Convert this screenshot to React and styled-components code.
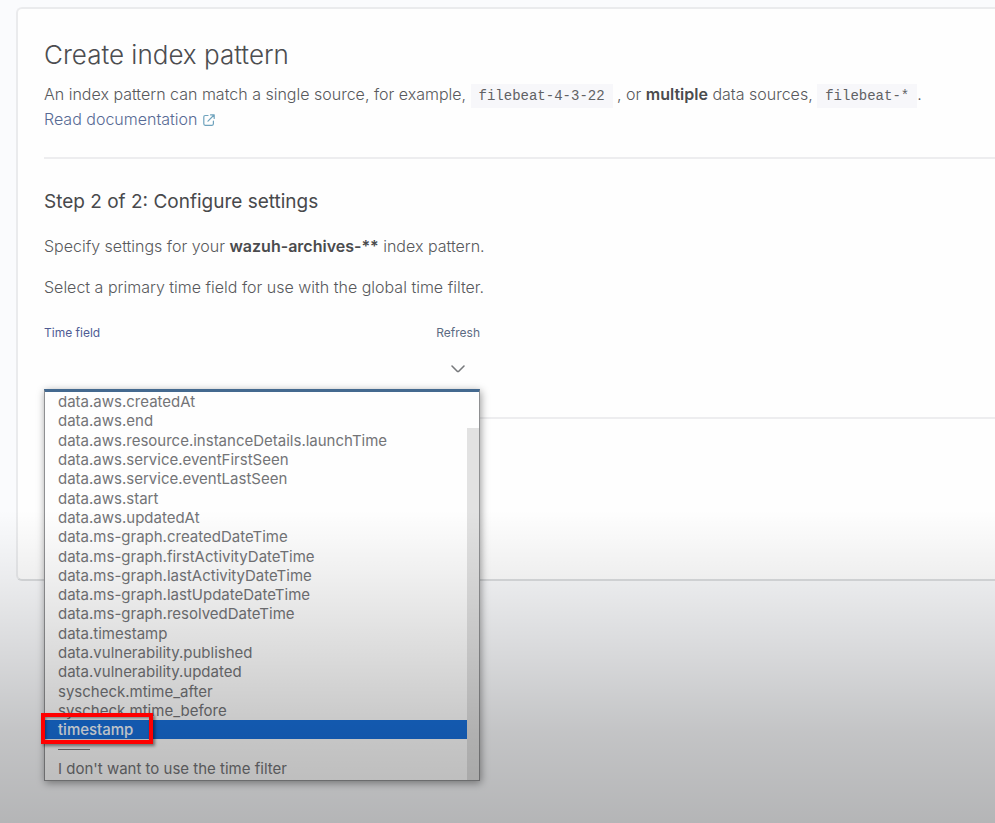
import React, { useState } from 'react';
import styled, { createGlobalStyle } from 'styled-components';

const GlobalStyle = createGlobalStyle`
  * { box-sizing: border-box; }
  body {
    margin: 0;
    background: #fafbfd;
    color: #58595c;
    font-family: Inter, "Liberation Sans", sans-serif;
    font-size: 16px;
    font-weight: 300;
    line-height: 25px;
  }
  h1, h2, p { margin: 0; }
`;

const Page = styled.div`
  position: relative;
  min-height: 100vh;
  padding: 7px 0 0 16px;
  overflow: hidden;
`;

const Shade = styled.div`
  position: absolute;
  inset: 0;
  z-index: 5;
  pointer-events: none;
  background: linear-gradient(
    to bottom,
    rgba(0, 0, 0, 0) 62%,
    rgba(0, 0, 0, 0.06) 70%,
    rgba(0, 0, 0, 0.14) 80%,
    rgba(0, 0, 0, 0.22) 89%,
    rgba(0, 0, 0, 0.28) 100%
  );
`;

const Panel = styled.main`
  min-height: 574px;
  padding: 30px 0 0 26px;
  background: #fefefe;
  border: 2px solid #eaebed;
  border-right: 0;
  border-bottom-color: #dcdee0;
  border-radius: 6px 0 0 6px;
`;

const Title = styled.h1`
  font-size: 26px;
  font-weight: 300;
  line-height: 32px;
  color: #4c4d50;
  margin-bottom: 11px;
`;

const Code = styled.code`
  padding: 4px 8px;
  background: #f7f7fa;
  font-family: "Liberation Mono", monospace;
  font-size: 14px;
  font-weight: 400;
  line-height: 16px;
  color: #606164;
`;

const Strong = styled.strong`
  font-weight: 600;
  color: #4a4b4d;
`;

const DocLink = styled.a`
  display: flex;
  align-items: center;
  gap: 5px;
  width: max-content;
  color: #576a94;
  text-decoration: none;
`;

const Divider = styled.hr`
  height: 2px;
  margin: 0;
  border: 0;
  background: #ededef;
`;

const Intro = styled.header`
  padding-bottom: 25px;
`;

const Settings = styled.form`
  display: flex;
  flex-direction: column;
  gap: 16px;
  padding: 29px 0 28px;
`;

const Subtitle = styled.h2`
  font-size: 19px;
  font-weight: 400;
  line-height: 28px;
  color: #48494c;
  margin-bottom: 2px;
`;

const Field = styled.div`
  position: relative;
  width: 436px;
  max-width: 100%;
  padding-top: 4px;
`;

const FieldHeader = styled.div`
  display: flex;
  justify-content: space-between;
  align-items: center;
  height: 24px;
  font-size: 12px;
  font-weight: 400;
`;

const Label = styled.label`
  color: #4f5c94;
`;

const RefreshButton = styled.button`
  padding: 0;
  border: 0;
  background: none;
  font: inherit;
  color: #5c6b82;
  cursor: pointer;
`;

const SelectBox = styled.div`
  display: grid;
  align-items: center;
  height: 45px;
  padding-top: 4px;

  > * { grid-area: 1 / 1; }
  svg { justify-self: end; margin-right: 14px; pointer-events: none; }
`;

const Select = styled.select`
  width: 100%;
  height: 40px;
  padding: 0 40px 0 12px;
  border: 0;
  appearance: none;
  background: transparent;
  color: transparent;
  font: inherit;
  outline: none;
`;

const Menu = styled.div`
  position: absolute;
  top: 100%;
  left: 0;
  right: 0;
  display: flex;
  background: #fefefe;
  border: 1px solid #8f9092;
  border-top: 3px solid #44698f;
  box-shadow: 1px 2px 8px rgba(0, 0, 0, 0.4);
`;

const Options = styled.div`
  flex: 1;
  display: grid;
  grid-template-rows: repeat(20, 1fr);
  height: 388px;
  padding-bottom: 2px;
`;

const Option = styled.button`
  position: relative;
  display: flex;
  align-items: center;
  min-height: 0;
  padding: 0 0 0 13px;
  border: 0;
  background: ${(p) => (p.$active ? '#1870dc' : 'transparent')};
  color: ${(p) => (p.$active ? '#f4f9ff' : '#737477')};
  font: inherit;
  font-size: 15px;
  font-weight: ${(p) => (p.$active ? 500 : 400)};
  line-height: 19px;
  text-align: left;
  white-space: nowrap;
`;

const Separator = styled.span`
  align-self: center;
  width: 32px;
  height: 1px;
  margin-left: 13px;
  background: #77787a;
`;

const ScrollTrack = styled.div`
  width: 12px;
  padding-top: 36px;
`;

const ScrollThumb = styled.div`
  height: 100%;
  background: #e2e2e2;
`;

const Highlight = styled.span`
  position: absolute;
  z-index: 10;
  top: -7px;
  bottom: -5px;
  left: -4px;
  width: 112px;
  border: 4px solid #ff0000;
  box-shadow: 2px 2px 3px rgba(0, 0, 0, 0.45), inset 1px 1px 3px rgba(0, 0, 0, 0.4);
`;

const fields = [
  'data.aws.createdAt',
  'data.aws.end',
  'data.aws.resource.instanceDetails.launchTime',
  'data.aws.service.eventFirstSeen',
  'data.aws.service.eventLastSeen',
  'data.aws.start',
  'data.aws.updatedAt',
  'data.ms-graph.createdDateTime',
  'data.ms-graph.firstActivityDateTime',
  'data.ms-graph.lastActivityDateTime',
  'data.ms-graph.lastUpdateDateTime',
  'data.ms-graph.resolvedDateTime',
  'data.timestamp',
  'data.vulnerability.published',
  'data.vulnerability.updated',
  'syscheck.mtime_after',
  'syscheck.mtime_before',
  'timestamp',
];
const noFilter = "I don't want to use the time filter";

const ExternalIcon = () => (
  <svg width="12" height="12" viewBox="0 0 12 12" fill="none" stroke="#6fa3bd" strokeWidth="1.2" strokeLinecap="round" strokeLinejoin="round" aria-hidden="true">
    <path d="M5 1.5H2.2A1.5 1.5 0 0 0 .8 3v6.8a1.5 1.5 0 0 0 1.4 1.5H9a1.5 1.5 0 0 0 1.4-1.5V7" />
    <path d="M7.5.8h3.7v3.7M11 1 5 7.2" />
  </svg>
);

const ChevronIcon = () => (
  <svg width="16" height="16" viewBox="0 0 16 16" fill="none" stroke="#77797c" strokeWidth="1.6" strokeLinecap="round" strokeLinejoin="round" aria-hidden="true">
    <path d="m2 5 5.2 5.2a1.1 1.1 0 0 0 1.6 0L14 5" />
  </svg>
);

export default function App() {
  const [value, setValue] = useState('');
  const [active, setActive] = useState('timestamp');

  return (
    <Page>
      <GlobalStyle />
      <Panel>
        <Intro>
          <Title>Create index pattern</Title>
          <p>
            An index pattern can match a single source, for example, <Code>filebeat-4-3-22</Code> , or{' '}
            <Strong>multiple</Strong> data sources, <Code>filebeat-*</Code>.
          </p>
          <DocLink href="#documentation">
            Read documentation <ExternalIcon />
          </DocLink>
        </Intro>
        <Divider />
        <Settings>
          <Subtitle>Step 2 of 2: Configure settings</Subtitle>
          <p>
            Specify settings for your <Strong>wazuh-archives-**</Strong> index pattern.
          </p>
          <p>Select a primary time field for use with the global time filter.</p>
          <Field>
            <FieldHeader>
              <Label htmlFor="time-field">Time field</Label>
              <RefreshButton type="button">Refresh</RefreshButton>
            </FieldHeader>
            <SelectBox>
              <Select id="time-field" value={value} onChange={(e) => setValue(e.target.value)}>
                <option value="" />
                {[...fields, noFilter].map((name) => (
                  <option key={name} value={name}>{name}</option>
                ))}
              </Select>
              <ChevronIcon />
            </SelectBox>
            <Menu>
              <Options role="listbox" aria-label="Time field">
                {fields.map((name) => (
                  <Option
                    key={name}
                    type="button"
                    role="option"
                    aria-selected={name === active}
                    $active={name === active}
                    onMouseEnter={() => setActive(name)}
                    onClick={() => setValue(name)}
                  >
                    {name}
                    {name === 'timestamp' && <Highlight />}
                  </Option>
                ))}
                <Separator />
                <Option type="button" role="option" aria-selected={false} onClick={() => setValue(noFilter)}>
                  {noFilter}
                </Option>
              </Options>
              <ScrollTrack>
                <ScrollThumb />
              </ScrollTrack>
            </Menu>
          </Field>
        </Settings>
        <Divider />
      </Panel>
      <Shade />
    </Page>
  );
}
